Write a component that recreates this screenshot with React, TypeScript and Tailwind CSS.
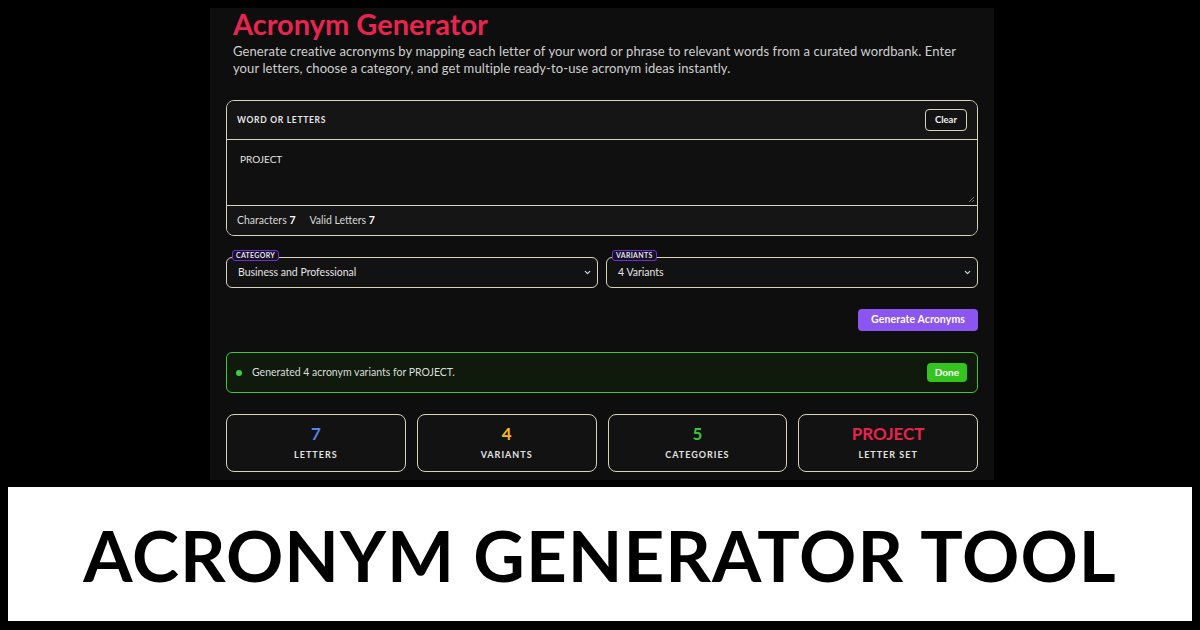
import { ChevronDown } from "lucide-react";

const stats = [
  { value: "7", label: "Letters", color: "text-[#5b82e8]" },
  { value: "4", label: "Variants", color: "text-[#f5b921]" },
  { value: "5", label: "Categories", color: "text-[#3cc23c]" },
  { value: "PROJECT", label: "Letter Set", color: "text-[#e8244f]" },
];

function SelectBox({ label, value }: { label: string; value: string }) {
  return (
    <div className="relative flex-1">
      <span className="absolute -top-[7px] left-[6px] rounded-[3px] border border-[#6d2fd6] bg-[#161021] px-[3px] text-[7px] font-bold uppercase leading-[9px] tracking-[0.3px] text-[#e5e0f5]">
        {label}
      </span>
      <div className="flex h-[31px] items-center justify-between rounded-md border-[1.5px] border-[#d8d3bd] bg-[#121212] pl-[11px] pr-[5px] text-[10.5px] text-[#e4e4e4]">
        <span>{value}</span>
        <ChevronDown className="h-[9px] w-[9px] text-[#ddd]" strokeWidth={3} />
      </div>
    </div>
  );
}

export default function App() {
  return (
    <div
      className="flex h-[630px] w-[1200px] flex-col bg-black"
      style={{ fontFamily: "Lato, 'Noto Sans', sans-serif" }}
    >
      <div className="ml-[210px] mt-[8px] flex h-[472px] w-[784px] flex-col bg-[#0e0e0e] px-[16px]">
        <div className="px-[7px]">
          <h1 className="text-[29px] font-bold leading-[32px] text-[#e8244f]">
            Acronym Generator
          </h1>
          <p className="mt-[3px] text-[13px] leading-[17px] tracking-[0.1px] text-[#cfcfcf]">
            Generate creative acronyms by mapping each letter of your word or phrase to relevant words from a curated wordbank. Enter
            <br />
            your letters, choose a category, and get multiple ready-to-use acronym ideas instantly.
          </p>
        </div>

        <div className="mt-[23px] overflow-hidden rounded-lg border-[1.5px] border-[#d8d3bd] bg-[#121212]">
          <div className="flex h-[38px] items-center justify-between bg-[#151515] pl-[10px] pr-[10px]">
            <span className="text-[8.5px] font-bold uppercase tracking-[0.7px] text-[#e6e6e6]">
              Word or Letters
            </span>
            <button className="h-[22px] rounded-[4px] border-[1.5px] border-[#d8d3bd] bg-[#121212] px-[9px] text-[9.5px] font-bold text-[#eee]">
              Clear
            </button>
          </div>
          <div className="relative h-[67px] border-y-[1.5px] border-[#d8d3bd] bg-[#101010] px-[13px] pt-[12px] text-[10px] text-[#e4e4e4]">
            PROJECT
            <svg className="absolute bottom-[2px] right-[2px]" width="7" height="7" viewBox="0 0 7 7">
              <path d="M6 1 L1 6 M6 4 L4 6" stroke="#777" strokeWidth="1" />
            </svg>
          </div>
          <div className="flex h-[29px] items-center gap-[14px] bg-[#151515] px-[10px] text-[10.5px] text-[#d9d9d9]">
            <span>
              Characters <b className="text-white">7</b>
            </span>
            <span>
              Valid Letters <b className="text-white">7</b>
            </span>
          </div>
        </div>

        <div className="mt-[21px] flex gap-[8px]">
          <SelectBox label="Category" value="Business and Professional" />
          <SelectBox label="Variants" value="4 Variants" />
        </div>

        <div className="mt-[21px] flex justify-end">
          <button className="h-[22px] rounded-[4px] bg-[#8b55f0] px-[13px] text-[10.5px] font-bold tracking-[0.1px] text-white">
            Generate Acronyms
          </button>
        </div>

        <div className="mt-[21px] flex h-[41px] items-center justify-between rounded-md border-[1.5px] border-[#46c43a] bg-[#0f1a0d] pl-[9px] pr-[10px]">
          <div className="flex items-center gap-[10px] text-[10.5px] text-[#dcdcdc]">
            <span className="h-[6px] w-[6px] rounded-full bg-[#3fce3f]" />
            Generated 4 acronym variants for PROJECT.
          </div>
          <span className="flex h-[19px] items-center rounded-[4px] bg-[#34c41e] px-[8px] text-[10px] font-bold text-white">
            Done
          </span>
        </div>

        <div className="mt-[21px] grid grid-cols-4 gap-[11px]">
          {stats.map((s) => (
            <div
              key={s.label}
              className="flex h-[58px] flex-col items-center justify-center rounded-lg border-[1.5px] border-[#d8d3bd] bg-[#121212]"
            >
              <span className={`text-[17px] font-bold leading-[20px] ${s.color}`}>{s.value}</span>
              <span className="mt-[4px] text-[9px] font-bold uppercase tracking-[1px] text-[#e2e2e2]">
                {s.label}
              </span>
            </div>
          ))}
        </div>
      </div>

      <div className="mx-[8px] mt-[7px] flex h-[134px] items-center justify-center bg-white">
        <span className="text-[71px] font-bold leading-none tracking-[1px] text-black">
          ACRONYM GENERATOR TOOL
        </span>
      </div>
    </div>
  );
}
